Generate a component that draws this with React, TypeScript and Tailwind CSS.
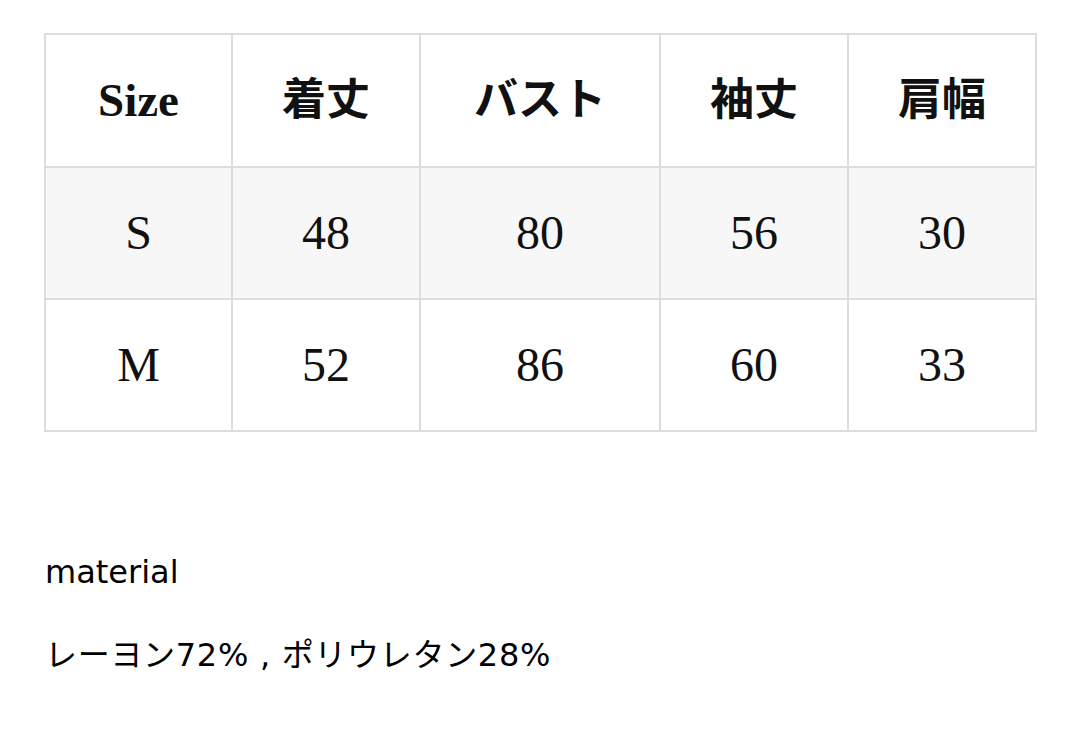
const headers = ["Size", "着丈", "バスト", "袖丈", "肩幅"];
const rows = [
  ["S", "48", "80", "56", "30"],
  ["M", "52", "86", "60", "33"],
];
const widths = ["w-[187px]", "w-[188px]", "w-[240px]", "w-[188px]", "w-[188px]"];

export default function App() {
  return (
    <div className="min-h-[742px] w-[1080px] bg-white text-[#111]">
      <div className="pl-[44px] pt-[33px]">
        <table
          className="w-[991px] table-fixed border-collapse text-center"
          style={{ fontFamily: '"Liberation Serif", "Noto Sans CJK JP", serif' }}
        >
          <colgroup>
            {widths.map((w, i) => (
              <col key={i} className={w} />
            ))}
          </colgroup>
          <thead>
            <tr className="h-[133px]">
              {headers.map((h, i) => (
                <th
                  key={h}
                  className={
                    i === 0
                      ? "border-2 border-[#dddddd] text-[47px] font-bold"
                      : "border-2 border-[#dddddd] text-[44px] font-bold"
                  }
                >
                  {h}
                </th>
              ))}
            </tr>
          </thead>
          <tbody>
            {rows.map((r, i) => (
              <tr key={r[0]} className={i === 0 ? "h-[132px] bg-[#f7f7f7]" : "h-[132px] bg-white"}>
                {r.map((c, j) => (
                  <td key={j} className="border-2 border-[#dddddd] text-[48px] font-normal">
                    {c}
                  </td>
                ))}
              </tr>
            ))}
          </tbody>
        </table>
      </div>

      {/* material */}
      <div
        className="pl-[45px] pt-[99px] text-[32px] leading-[83px] text-black"
        style={{ fontFamily: '"DejaVu Sans", "Noto Sans CJK JP", sans-serif' }}
      >
        <p>material</p>
        <p className="tracking-[0.7px]">レーヨン72% , ポリウレタン28%</p>
      </div>
    </div>
  );
}
